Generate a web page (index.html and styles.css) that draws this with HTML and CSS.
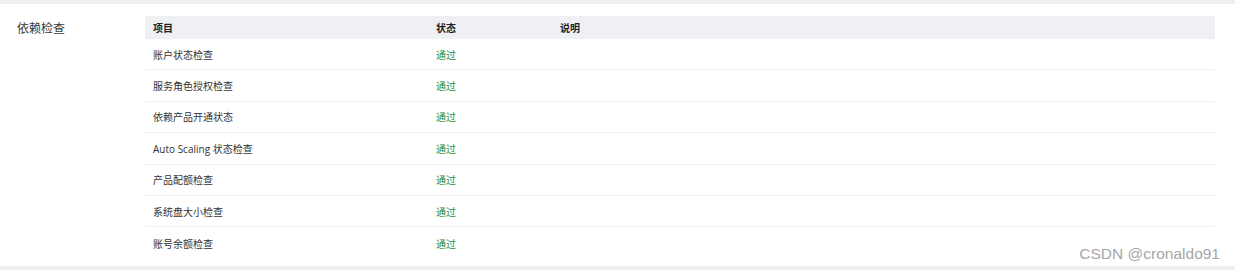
FILE: index.html
```html
<!DOCTYPE html>
<html lang="zh-CN">
<head>
<meta charset="utf-8">
<link rel="stylesheet" href="styles.css">
</head>
<body>
<div class="band"></div>
<section class="section">
  <div class="label">依赖检查</div>
  <div class="table">
    <div class="row head">
      <div class="c1">项目</div><div class="c2">状态</div><div class="c3">说明</div>
    </div>
    <div class="row"><div class="c1">账户状态检查</div><div class="c2 ok">通过</div><div class="c3"></div></div>
    <div class="row"><div class="c1">服务角色授权检查</div><div class="c2 ok">通过</div><div class="c3"></div></div>
    <div class="row"><div class="c1">依赖产品开通状态</div><div class="c2 ok">通过</div><div class="c3"></div></div>
    <div class="row"><div class="c1">Auto Scaling 状态检查</div><div class="c2 ok">通过</div><div class="c3"></div></div>
    <div class="row"><div class="c1">产品配额检查</div><div class="c2 ok">通过</div><div class="c3"></div></div>
    <div class="row"><div class="c1">系统盘大小检查</div><div class="c2 ok">通过</div><div class="c3"></div></div>
    <div class="row last"><div class="c1">账号余额检查</div><div class="c2 ok">通过</div><div class="c3"></div></div>
  </div>
</section>
<div class="band bottom"></div>
<div class="watermark">CSDN @cronaldo91</div>
</body>
</html>
```
FILE: styles.css
```css
html, body {
  margin: 0;
  padding: 0;
  background: #fff;
  width: 1235px;
  height: 270px;
  overflow: hidden;
  position: relative;
  font-family: "Open Sans", "Noto Sans CJK SC", sans-serif;
  color: #333;
}
.band {
  height: 4px;
  background: #eeeff2;
}
.band.bottom {
  height: 5px;
}
.section {
  display: flex;
  padding: 12px 20px 7px 0;
}
.label {
  width: 145px;
  box-sizing: border-box;
  padding-left: 17px;
  font-size: 12px;
  line-height: 23px;
  color: #3a3a3a;
  font-family: "Noto Sans CJK SC", sans-serif;
}
.table {
  flex: 1;
  font-size: 10px;
}
.row {
  display: grid;
  grid-template-columns: 283px 124px 1fr;
  height: 31.4px;
  align-items: center;
  border-bottom: 1px solid #f0f0f2;
  box-sizing: border-box;
}
.row.last {
  border-bottom: none;
}
.row > div {
  padding-left: 8px;
}
.head {
  height: 23px;
  background: #eff0f4;
  border-bottom: none;
  font-weight: 700;
  color: #222;
}
.ok {
  color: #1e8e3e;
}
.watermark {
  position: absolute;
  right: 15px;
  bottom: 7px;
  font-family: "Liberation Sans", Arial, sans-serif;
  font-size: 15.5px;
  color: #a6a6a6;
}
```
